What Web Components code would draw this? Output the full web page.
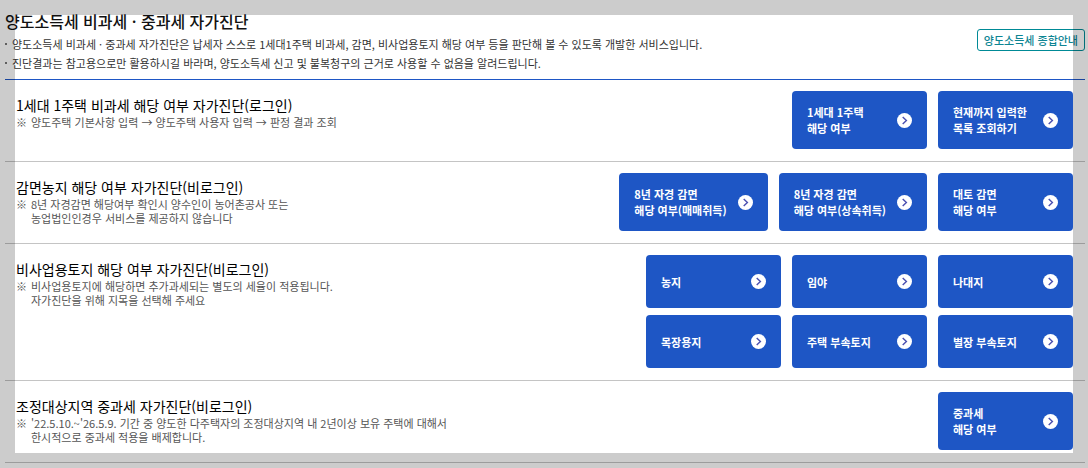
<!DOCTYPE html>
<html lang="ko">
<head>
<meta charset="utf-8">
<meta name="viewport" content="width=device-width, initial-scale=1">
<title>양도소득세 비과세 · 중과세 자가진단</title>
<style>
  body { margin: 0; background: #fff; color: #111; font-family: "Noto Sans CJK KR", "Noto Sans", sans-serif; }
</style>
</head>
<body>
<diagnosis-page>
  <page-header>
    <span slot="title">양도소득세 비과세 · 중과세 자가진단</span>
    <li>양도소득세 비과세 · 중과세 자가진단은 납세자 스스로 1세대1주택 비과세, 감면, 비사업용토지 해당 여부 등을 판단해 볼 수 있도록 개발한 서비스입니다.</li>
    <li>진단결과는 참고용으로만 활용하시길 바라며, 양도소득세 신고 및 불복청구의 근거로 사용할 수 없음을 알려드립니다.</li>
    <span slot="action">양도소득세 종합안내</span>
  </page-header>

  <diagnosis-section>
    <span slot="title">1세대 1주택 비과세 해당 여부 자가진단(로그인)</span>
    <span slot="note">양도주택 기본사항 입력 → 양도주택 사용자 입력 → 판정 결과 조회</span>
    <link-button>1세대 1주택<br>해당 여부</link-button>
    <link-button>현재까지 입력한<br>목록 조회하기</link-button>
  </diagnosis-section>

  <diagnosis-section>
    <span slot="title">감면농지 해당 여부 자가진단(비로그인)</span>
    <span slot="note">8년 자경감면 해당여부 확인시 양수인이 농어촌공사 또는<br>농업법인인경우 서비스를 제공하지 않습니다</span>
    <link-button>8년 자경 감면<br>해당 여부(매매취득)</link-button>
    <link-button>8년 자경 감면<br>해당 여부(상속취득)</link-button>
    <link-button>대토 감면<br>해당 여부</link-button>
  </diagnosis-section>

  <diagnosis-section grid>
    <span slot="title">비사업용토지 해당 여부 자가진단(비로그인)</span>
    <span slot="note">비사업용토지에 해당하면 추가과세되는 별도의 세율이 적용됩니다.<br>자가진단을 위해 지목을 선택해 주세요</span>
    <link-button>농지</link-button>
    <link-button>임야</link-button>
    <link-button>나대지</link-button>
    <link-button>목장용지</link-button>
    <link-button>주택 부속토지</link-button>
    <link-button>별장 부속토지</link-button>
  </diagnosis-section>

  <diagnosis-section>
    <span slot="title">조정대상지역 중과세 자가진단(비로그인)</span>
    <span slot="note">'22.5.10.~'26.5.9. 기간 중 양도한 다주택자의 조정대상지역 내 2년이상 보유 주택에 대해서<br>한시적으로 중과세 적용을 배제합니다.</span>
    <link-button>중과세<br>해당 여부</link-button>
  </diagnosis-section>
</diagnosis-page>

<script>
function define(name, markup) {
  const template = document.createElement('template');
  template.innerHTML = markup;
  customElements.define(name, class extends HTMLElement {
    constructor() {
      super();
      this.attachShadow({ mode: 'open' }).append(template.content.cloneNode(true));
    }
  });
}

define('diagnosis-page', `
  <style>
    :host { display: block; padding: 11px 3px 5px 5px; }
    /* translucent frame laid over the window edges */
    .frame { position: fixed; inset: 0; border: 15px solid rgba(0, 0, 0, .2); pointer-events: none; }
  </style>
  <main><slot></slot></main>
  <div class="frame"></div>
`);

define('page-header', `
  <style>
    :host { display: flex; justify-content: space-between; align-items: center; padding-bottom: 6px; border-bottom: 1px solid #1e56c5; }
    h1 { margin: 0; font-size: 16px; line-height: 20px; font-weight: 500; }
    ul { margin: 4px 0 0; padding: 0; list-style: none; font-size: 11px; line-height: 19px; color: #333; }
    ::slotted(li) { padding-left: 7px; background: linear-gradient(#777, #777) 0 8px / 2px 2px no-repeat; }
    button { box-sizing: border-box; height: 22px; margin-bottom: 4px; padding: 0 6px; border: 1px solid #008a96; border-radius: 3px;
      background: #fff; color: #0d8593; font: 500 11px/20px "Noto Sans CJK KR", sans-serif; white-space: nowrap; }
  </style>
  <div>
    <h1><slot name="title"></slot></h1>
    <ul><slot></slot></ul>
  </div>
  <button type="button"><slot name="action"></slot></button>
`);

define('diagnosis-section', `
  <style>
    :host { display: flex; justify-content: space-between; gap: 16px; padding: 11px 12px 12px 11px; border-bottom: 1px solid #c4c4c4; }
    h2 { margin: 4px 0 0; font-size: 14px; line-height: 20px; font-weight: 400; color: #000; }
    p { display: flex; gap: 4px; margin: 0; font-size: 11px; line-height: 14px; color: #555; }
    .mark { width: 11px; text-align: center; }
    .actions { display: flex; gap: 11px; }
    :host([grid]) .actions { display: grid; grid-template-columns: repeat(3, auto); gap: 7px 11px; --button-height: 53px; }
  </style>
  <div>
    <h2><slot name="title"></slot></h2>
    <p><span class="mark">※</span><slot name="note"></slot></p>
  </div>
  <div class="actions"><slot></slot></div>
`);

define('link-button', `
  <style>
    :host { display: block; }
    button { box-sizing: border-box; display: flex; align-items: center; justify-content: space-between; gap: 11px;
      min-width: 135px; height: var(--button-height, 58px); padding: 0 15px; border: 0; border-radius: 4px;
      background: #1e56c5; color: #fff; font: 700 11px/16px "Noto Sans CJK KR", sans-serif; text-align: left; white-space: nowrap; }
    svg { flex: none; display: block; }
  </style>
  <button type="button">
    <span><slot></slot></span>
    <svg width="15" height="15" viewBox="0 0 15 15" aria-hidden="true">
      <circle cx="7.5" cy="7.5" r="7.5" fill="#fff"/>
      <path d="M5.7 4 9.4 7.5 5.7 11" fill="none" stroke="#4a4fb0" stroke-width="1.4"/>
    </svg>
  </button>
`);
</script>
</body>
</html>
